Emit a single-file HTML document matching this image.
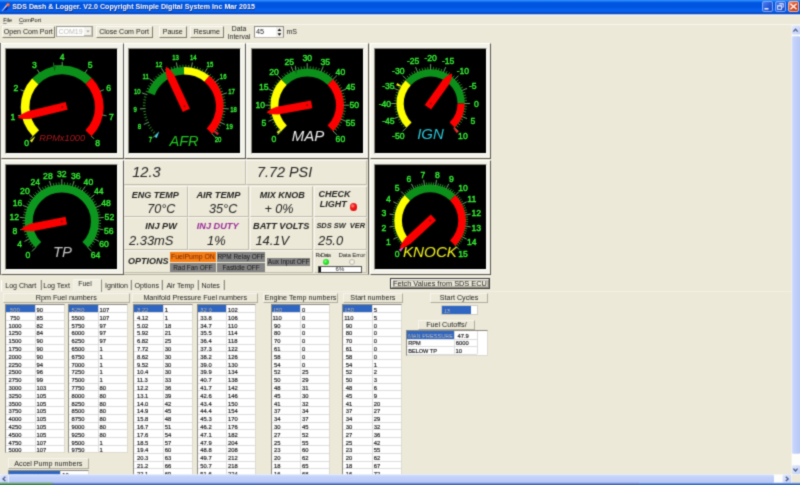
<!DOCTYPE html>
<html lang="en"><head><meta charset="utf-8"><title>SDS Dash &amp; Logger</title>
<style>

html,body{margin:0;padding:0}
body{width:800px;height:500px;overflow:hidden;background:#fff;position:relative;
 font-family:"Liberation Sans",sans-serif;color:#000;font-size:7px;line-height:1}
div,span{position:absolute;box-sizing:border-box;white-space:nowrap}
#win{left:0;top:0;width:800px;height:485px;background:#ece9d8;overflow:hidden;filter:url(#soft)}
#title{left:0;top:0;width:800px;height:14px;border-bottom:0 solid #000;
 background:linear-gradient(#2f8cfc 0%,#2c88fa 6%,#0862ea 14%,#0055e0 21%,#0054e0 52%,#0560ec 68%,#0560ec 82%,#0a4cc6 92%,#0b45b8 100%)}
#title b{position:absolute;left:12.3px;top:4.3px;font-size:7.1px;color:#fff;font-weight:bold;letter-spacing:0.02px;
 text-shadow:0.4px 0.5px 0 #0a2a80}
.wb{top:1.4px;width:11px;height:11px;border:1px solid #7ea9f6;border-radius:2px;overflow:hidden;
 background:linear-gradient(135deg,#4d80f0,#2658d8 55%,#1c46c2)}
#menu{left:0;top:14px;width:800px;height:10px;background:#ece9d8;font-size:5.6px;border-top:1px solid #b4c6ea}
#menu span{top:3.3px;color:#0c0c0c}
#menu u{text-decoration:underline;text-decoration-thickness:0.5px;text-decoration-color:#8a8a8a;text-underline-offset:0.6px}
.btn{background:#ece9d8;border-top:1px solid #fbfaf4;border-left:1px solid #fbfaf4;
 border-right:1px solid #7d7a6e;border-bottom:1px solid #7d7a6e;text-align:center;color:#1c1c1c}
.t7{font-size:7.05px;line-height:9.5px}
.frame{background:#f4f3ea;border-top:1px solid #fefefb;border-left:1px solid #fefefb;
 border-right:1px solid #55534c;border-bottom:1px solid #55534c}
.blk{background:#000;border-top:1px solid #8d8a80;border-left:1px solid #8d8a80;
 border-right:1px solid #fdfdfa;border-bottom:1px solid #fdfdfa}
.box{border-top:1px solid #f8f7f0;border-left:1px solid #f8f7f0;border-right:1px solid #c0bcac;
 border-bottom:1px solid #c0bcac;background:#ece9d8}
.bi{font-weight:bold;font-style:italic;font-size:9.1px;color:#222}
.it{font-style:italic;color:#222}
.opt{font-size:6.45px;color:#161616;text-align:center;background:#838383;line-height:9.8px}
.tbl{background:#fff;border-left:1px solid #8a887e;border-top:1px solid #8a887e;
 border-right:1px solid #dddbd0;border-bottom:1px solid #dddbd0;overflow:hidden;font-size:5.85px;color:#0a0a0a;-webkit-text-stroke:0.14px #111}
.tbl i{position:absolute;left:0;right:0;height:1px;background:#dcdcdc}
.tbl u{position:absolute;top:0;bottom:0;width:1px;background:#dcdcdc}
.tbl s{position:absolute;text-decoration:none;white-space:pre}
.tbl em{position:absolute;background:#2f66c2}
.hdr{font-size:7.18px;line-height:9.6px;border-right-color:#aeab9e;border-bottom-color:#aeab9e;border-top-color:#f6f5ee;border-left-color:#f6f5ee}
.tab{font-size:7.1px;top:283.4px;color:#1c1c1c}
.tsep{top:280px;height:10.4px;width:3px;border-left:1px solid #f2f1e7;border-right:1px solid #8f8c80;background:#d2cfc2}

</style></head><body>
<svg width="0" height="0" style="position:absolute"><defs><filter id="soft" x="0" y="0" width="100%" height="100%" color-interpolation-filters="sRGB"><feConvolveMatrix order="3" kernelMatrix="1 4 1 4 16 4 1 4 1" divisor="36" edgeMode="duplicate" preserveAlpha="true"/></filter></defs></svg>
<div id="win">
<div id="title">
<svg style="position:absolute;left:1px;top:2px" width="10" height="10" viewBox="0 0 10 10"><path d="M2.4 8.7L6.3 4.3L7.4 5.6L5.6 8.2Z" fill="#16248c"/><path d="M0.7 8.9L5.6 2.6L6.6 3.6L1.3 9.1Z" fill="#e6e2fb"/><circle cx="7.1" cy="2.8" r="1.75" fill="#ee5a26"/><circle cx="6.8" cy="2.6" r="0.8" fill="#ffa47a"/></svg>
<b>SDS Dash &amp; Logger. V2.0 Copyright Simple Digital System Inc Mar 2015</b>
<div class="wb" style="left:762.3px"><svg width="9" height="9" viewBox="0 0 9 9" style="position:absolute;left:0;top:0"><rect x="1.4" y="6.1" width="4.1" height="1.4" fill="#fff"/></svg></div>
<div class="wb" style="left:775px"><svg width="9" height="9" viewBox="0 0 9 9" style="position:absolute;left:0;top:0"><path d="M3.3 1.6H7.3V5.2H6.2" stroke="#dfe9ff" stroke-width="0.9" fill="none"/><path d="M3.3 2.1H7.3" stroke="#dfe9ff" stroke-width="0.6"/><rect x="1.6" y="3.7" width="4" height="3.6" stroke="#eef3ff" stroke-width="0.9" fill="#2c5cd8"/><path d="M1.6 4.2H5.6" stroke="#eef3ff" stroke-width="0.6"/></svg></div>
<div class="wb" style="left:787.6px;border-color:#f0b8a4;background:linear-gradient(135deg,#ec8a68,#d9502a 45%,#bf3a16)"><svg width="9" height="9" viewBox="0 0 9 9" style="position:absolute;left:0;top:0"><path d="M1.4 1.7L7.6 7.3M7.6 1.7L1.4 7.3" stroke="#fff" stroke-width="1.25"/></svg></div>
</div>
<div id="menu"><div style="left:0;top:0;width:800px;height:1px;background:#f3f3ee"></div><span style="left:3.2px"><u>F</u>ile</span><span style="left:19px"><u>C</u>omPort</span></div>
<div style="left:0;top:24px;width:800px;height:1px;background:#f7f6ef"></div>
<div class="btn t7" style="left:1.5px;top:26px;width:53.5px;height:11.8px">Open Com Port</div>
<div style="left:55.8px;top:25.6px;width:37.2px;height:11.4px;background:#fff;border:1px solid #9a988f;border-bottom-color:#b9b7ab;font-size:7.05px;line-height:9.6px;color:#bdbbb2;padding-left:1.6px">COM19<div style="right:0;top:0;width:8px;height:9.4px;background:#f3f2ec;border-bottom:1px solid #b5b3a8;border-right:1px solid #c9c7bc"><svg style="position:absolute;left:1.8px;top:3.4px" width="4" height="3" viewBox="0 0 4 3"><path d="M0.2 0.4H3.8L2 2.6Z" fill="#a9a79d"/></svg></div></div>
<div class="btn t7" style="left:95.5px;top:26px;width:57px;height:11.8px">Close Com Port</div>
<div class="btn t7" style="left:159px;top:26px;width:27.5px;height:11.8px">Pause</div>
<div class="btn t7" style="left:190px;top:26px;width:33.5px;height:11.8px">Resume</div>
<div style="left:225px;top:25.3px;width:28px;height:14px;font-size:6.9px;line-height:7.5px;text-align:center;color:#222;white-space:normal">Data Interval</div>
<div style="left:254px;top:26px;width:29.6px;height:12.2px;background:#fff;border:1px solid #8f8d84;border-bottom-color:#b9b7ab;font-size:7.3px;line-height:9.8px;padding-left:0.9px;color:#222">45<div style="right:0;top:0;width:7px;height:10.2px;background:#efeee8"><svg style="position:absolute;left:0;top:0" width="7" height="10.2" viewBox="0 0 7 10.2"><path d="M1.5 3.9L3.4 1.5L5.3 3.9Z M1.5 6.3L3.4 8.7L5.3 6.3Z" fill="#111"/></svg></div></div>
<div style="left:286.5px;top:28px;font-size:7.05px;color:#222">mS</div>
<div style="left:0;top:43px;width:1px;height:232px;background:#77756b"></div>
<div class="frame" style="left:1px;top:43px;width:122.8px;height:115.8px"></div>
<div class="frame" style="left:123.8px;top:43px;width:122.4px;height:115.8px"></div>
<div class="frame" style="left:246.3px;top:43px;width:123.1px;height:115.8px"></div>
<div class="frame" style="left:369.5px;top:43px;width:121.6px;height:115.8px"></div>
<div class="frame" style="left:1px;top:159.5px;width:122.8px;height:115.4px"></div>
<div class="frame" style="left:369.5px;top:159.5px;width:121.6px;height:115.4px"></div>
<div class="blk" style="left:5.2px;top:48.2px;width:112.6px;height:105.6px"></div>
<div class="blk" style="left:128px;top:48.2px;width:112.8px;height:105.6px"></div>
<div class="blk" style="left:251px;top:48.2px;width:112.6px;height:105.6px"></div>
<div class="blk" style="left:373.6px;top:48.2px;width:113px;height:105.6px"></div>
<div class="blk" style="left:5.2px;top:164px;width:112.6px;height:106.4px"></div>
<div class="blk" style="left:373.6px;top:164px;width:113px;height:106.4px"></div>
<div class="frame" style="left:123.8px;top:159px;width:245.6px;height:115.9px;border-left:none;border-top:none;background:#ece9d8;border-bottom-color:#b4b1a2"></div>
<div class="box" style="left:124.2px;top:160px;width:121.4px;height:24.6px"></div>
<div class="box" style="left:246.4px;top:160px;width:120.8px;height:24.6px"></div>
<div class="box" style="left:124.2px;top:185.8px;width:63.6px;height:31.2px"></div>
<div class="box" style="left:188.4px;top:185.8px;width:61px;height:31.2px"></div>
<div class="box" style="left:249.9px;top:185.8px;width:63.3px;height:31.2px"></div>
<div class="box" style="left:313.8px;top:185.8px;width:53.4px;height:31.2px"></div>
<div class="box" style="left:124.2px;top:217.4px;width:63.6px;height:32.2px"></div>
<div class="box" style="left:188.4px;top:217.4px;width:61px;height:32.2px"></div>
<div class="box" style="left:249.9px;top:217.4px;width:63.3px;height:32.2px"></div>
<div class="box" style="left:313.8px;top:217.4px;width:53.4px;height:32.2px"></div>
<div class="box" style="left:124.2px;top:250.2px;width:189px;height:23px"></div>
<div class="box" style="left:313.8px;top:250.2px;width:53.4px;height:23px"></div>
<div class="it" style="left:132.2px;top:165.14px;font-size:14.6px;">12.3</div>
<div class="it" style="left:257px;top:165.31px;font-size:14.4px;">7.72 PSI</div>
<div class="bi" style="left:131.7px;top:190.88px;font-size:9.0px;">ENG TEMP</div>
<div class="it" style="left:147.3px;top:203.33px;font-size:12.6px;">70&deg;C</div>
<div class="bi" style="left:196.4px;top:190.71px;font-size:9.2px;">AIR TEMP</div>
<div class="it" style="left:209.1px;top:203.33px;font-size:12.6px;">35&deg;C</div>
<div class="bi" style="left:259.8px;top:190.68px;font-size:9.0px;">MIX KNOB</div>
<div class="it" style="left:264.4px;top:203.13px;font-size:12.6px;">+ 0%</div>
<div class="bi" style="left:318.4px;top:190.48px;font-size:9.0px;">CHECK</div>
<div class="bi" style="left:319.7px;top:199.58px;font-size:9.0px;">LIGHT</div>
<div class="bi" style="left:145.2px;top:221.51px;font-size:9.2px;">INJ PW</div>
<div class="it" style="left:129px;top:234.58px;font-size:12.9px;">2.33mS</div>
<div class="bi" style="left:196.7px;top:221.51px;font-size:9.2px;color:#9a2a9a">INJ DUTY</div>
<div class="it" style="left:207px;top:234.58px;font-size:12.9px;">1%</div>
<div class="bi" style="left:253px;top:221.91px;font-size:9.2px;">BATT VOLTS</div>
<div class="it" style="left:255.4px;top:234.58px;font-size:12.9px;">14.1V</div>
<div class="bi" style="left:316.4px;top:222.09px;font-size:7.45px;">SDS SW&nbsp; VER</div>
<div class="it" style="left:318px;top:234.58px;font-size:12.9px;">25.0</div>
<div class="bi" style="left:128px;top:257.48px;font-size:9.0px;">OPTIONS</div>
<div class="opt" style="left:169.6px;top:252.3px;width:46.6px;height:9.4px;background:#f67c14;color:#702808;font-size:6.9px">FuelPump ON</div>
<div class="opt" style="left:217.2px;top:252.3px;width:47.6px;height:9.4px">RPM Relay OFF</div>
<div class="opt" style="left:169.6px;top:262.8px;width:46.6px;height:9.2px">Rad Fan OFF</div>
<div class="opt" style="left:217.2px;top:262.8px;width:47.6px;height:9.2px">Fastidle OFF</div>
<div class="opt" style="left:267.3px;top:257.8px;width:43px;height:8.6px;line-height:8.8px">Aux Input OFF</div>
<div style="left:349.6px;top:203.4px;width:7.8px;height:7.8px;border-radius:50%;background:radial-gradient(circle at 38% 36%,#ff9a8a 0%,#f01818 35%,#d80000 100%)"></div>
<div class="" style="left:315.5px;top:252.9px;font-size:5.7px;color:#1a1a1a;letter-spacing:-0.72px">RxData</div>
<div class="" style="left:338.4px;top:252.1px;font-size:6.1px;color:#1a1a1a;letter-spacing:-0.14px">Data Error</div>
<div style="left:322.8px;top:259px;width:6.2px;height:6.2px;border-radius:50%;background:radial-gradient(circle at 40% 40%,#8dff8d 0%,#22e022 45%,#12c012 100%)"></div>
<div style="left:349px;top:259px;width:6px;height:6px;border-radius:50%;background:#f4f2ea;border:0.6px solid #bdb9a8"></div>
<div style="left:317.6px;top:266px;width:44.6px;height:6.8px;background:#fff;border:1px solid #505050;font-size:6px;text-align:center;line-height:5.2px;color:#222">6%<div style="left:0;top:0;width:2px;height:100%;background:#111"></div></div>
<svg style="position:absolute;left:0;top:0" width="495" height="275" viewBox="0 0 495 275" font-family="Liberation Sans, sans-serif">
<path d="M32.86 136.34A41.5 41.5 0 0 1 32.23 78.30L38.51 84.31A32.8 32.8 0 0 0 39.01 130.19Z" fill="#ffff00"/>
<path d="M32.23 78.30A41.5 41.5 0 0 1 91.83 77.94L85.62 84.04A32.8 32.8 0 0 0 38.51 84.31Z" fill="#0b9019"/>
<path d="M91.83 77.94A41.5 41.5 0 0 1 91.54 136.34L85.39 130.19A32.8 32.8 0 0 0 85.62 84.04Z" fill="#ff0000"/>
<path d="M33.21 135.99L30.31 138.89M21.99 115.00L17.97 115.80M24.32 91.31L20.53 89.74M39.42 72.91L37.14 69.50M62.20 66.00L62.20 61.90M84.98 72.91L87.26 69.50M100.08 91.31L103.87 89.74M102.41 115.00L106.43 115.80M91.19 135.99L94.09 138.89" stroke="#74b474" stroke-width="0.9" fill="none"/>
<g font-size="8.6" fill="#34f034" stroke="#34f034" stroke-width="0.42" text-anchor="middle">
<text x="26.7" y="145.6">0</text>
<text x="13.0" y="119.9">1</text>
<text x="15.8" y="90.9">2</text>
<text x="34.3" y="68.4">3</text>
<text x="62.2" y="59.9">4</text>
<text x="90.1" y="68.4">5</text>
<text x="108.6" y="90.9">6</text>
<text x="111.4" y="119.9">7</text>
<text x="97.7" y="145.6">8</text>
</g>
<path d="M-3.2 -1.3L3.2 -0.2L3.2 0.2L-3.2 1.3Z" fill="#f4f020" transform="translate(32.9 139.1) rotate(-50)"/>
<text x="62.2" y="141.0" font-size="9.25" font-style="italic" fill="#a81c20" text-anchor="middle">RPMx1000</text>
<g transform="translate(62.2 107.0) rotate(166.39)"><path d="M-4.6 -3.95L-4.6 3.95L34.6 3.95L40.6 2.6L44.1 1.1L45.6 0L44.1 -1.1L40.6 -2.6L34.6 -3.95Z" fill="#fb0000"/><circle cx="0" cy="0" r="0.9" fill="#700"/></g>
<path d="M147.57 92.49A39.3 39.3 0 0 1 183.97 66.90L184.06 74.60A31.6 31.6 0 0 0 154.79 95.17Z" fill="#0b9019"/>
<path d="M183.97 66.90A39.3 39.3 0 0 1 209.38 75.86L204.48 81.80A31.6 31.6 0 0 0 184.06 74.60Z" fill="#ffff00"/>
<path d="M209.38 75.86A39.3 39.3 0 0 1 212.19 133.99L206.74 128.54A31.6 31.6 0 0 0 204.48 81.80Z" fill="#ff0000"/>
<path d="M156.96 133.64L152.93 137.67M149.02 122.12L143.82 124.46M145.67 108.54L139.98 108.89M147.36 94.66L141.91 92.96M153.86 82.27L149.37 78.76M164.33 73.00L161.38 68.12M177.41 68.04L176.38 62.43M191.39 68.04L192.42 62.43M204.47 73.00L207.42 68.12M214.94 82.27L219.43 78.76M221.44 94.66L226.89 92.96M223.13 108.54L228.82 108.89M219.78 122.12L224.98 124.46M211.84 133.64L215.87 137.67" stroke="#74b474" stroke-width="0.9" fill="none"/>
<path d="M154.90 131.71L153.01 133.34M153.13 129.50L151.12 131.00M151.52 127.18L149.41 128.52M150.09 124.74L147.89 125.93M147.77 119.59L145.42 120.45M146.90 116.90L144.49 117.59M146.22 114.15L143.77 114.66M145.74 111.37L143.27 111.70M145.40 105.73L142.90 105.70M145.54 102.91L143.05 102.69M145.88 100.10L143.41 99.71M146.42 97.32L143.99 96.76M148.10 91.93L145.78 91.02M149.23 89.34L146.98 88.26M150.55 86.84L148.38 85.59M152.04 84.43L149.96 83.04M155.52 79.99L153.67 78.31M157.50 77.96L155.77 76.15M159.61 76.09L158.02 74.16M161.86 74.37L160.41 72.33M166.69 71.45L165.56 69.22M169.26 70.26L168.29 67.96M171.90 69.26L171.10 66.89M174.61 68.45L173.98 66.03M180.17 67.43L179.90 64.95M182.99 67.23L182.90 64.73M185.81 67.23L185.90 64.73M188.63 67.43L188.90 64.95M194.19 68.45L194.82 66.03M196.90 69.26L197.70 66.89M199.54 70.26L200.51 67.96M202.11 71.45L203.24 69.22M206.94 74.37L208.39 72.33M209.19 76.09L210.78 74.16M211.30 77.96L213.03 76.15M213.28 79.99L215.13 78.31M216.76 84.43L218.84 83.04M218.25 86.84L220.42 85.59M219.57 89.34L221.82 88.26M220.70 91.93L223.02 91.02M222.38 97.32L224.81 96.76M222.92 100.10L225.39 99.71M223.26 102.91L225.75 102.69M223.40 105.73L225.90 105.70M223.06 111.37L225.53 111.70M222.58 114.15L225.03 114.66M221.90 116.90L224.31 117.59M221.03 119.59L223.38 120.45M218.71 124.74L220.91 125.93M217.28 127.18L219.39 128.52M215.67 129.50L217.68 131.00M213.90 131.71L215.79 133.34" stroke="#38bc38" stroke-width="0.75" fill="none"/>
<g font-size="7.5" fill="#34f034" stroke="#34f034" stroke-width="0.42" text-anchor="middle">
<text transform="translate(150.5 141.5) scale(0.8 1)">7</text>
<text transform="translate(139.4 129.1) scale(0.8 1)">8</text>
<text transform="translate(135.2 111.9) scale(0.8 1)">9</text>
<text transform="translate(137.3 94.2) scale(0.8 1)">10</text>
<text transform="translate(145.6 78.5) scale(0.8 1)">11</text>
<text transform="translate(158.9 66.7) scale(0.8 1)">12</text>
<text transform="translate(175.5 60.4) scale(0.8 1)">13</text>
<text transform="translate(193.3 60.4) scale(0.8 1)">14</text>
<text transform="translate(209.9 66.7) scale(0.8 1)">15</text>
<text transform="translate(223.2 78.5) scale(0.8 1)">16</text>
<text transform="translate(231.5 94.2) scale(0.8 1)">17</text>
<text transform="translate(233.6 111.9) scale(0.8 1)">18</text>
<text transform="translate(229.4 129.1) scale(0.8 1)">19</text>
<text transform="translate(218.1 141.5) scale(0.8 1)">20</text>
</g>
<path d="M-3.2 -1.3L3.2 -0.2L3.2 0.2L-3.2 1.3Z" fill="#48dcf4" transform="translate(157.2 134.6) rotate(-60)"/>
<path d="M-3.2 -1.3L3.2 -0.2L3.2 0.2L-3.2 1.3Z" fill="#e4203a" transform="translate(215.8 132.0) rotate(224)"/>
<text x="184" y="145.5" font-size="14.6" font-style="italic" fill="#22c822" text-anchor="middle">AFR</text>
<g transform="translate(184.4 106.2) rotate(245.08)"><path d="M-4.6 -3.95L-4.6 3.95L32.5 3.95L38.5 2.6L42.0 1.1L43.5 0L42.0 -1.1L38.5 -2.6L32.5 -3.95Z" fill="#fb0000"/><circle cx="0" cy="0" r="0.9" fill="#700"/></g>
<path d="M281.18 131.22A36.8 36.8 0 0 1 281.18 79.18L286.84 84.84A28.8 28.8 0 0 0 286.84 125.56Z" fill="#ffff00"/>
<path d="M281.18 79.18A36.8 36.8 0 0 1 333.22 79.18L327.56 84.84A28.8 28.8 0 0 0 286.84 84.84Z" fill="#0b9019"/>
<path d="M333.22 79.18A36.8 36.8 0 0 1 333.22 131.22L327.56 125.56A28.8 28.8 0 0 0 327.56 84.84Z" fill="#ff0000"/>
<path d="M281.53 130.87L277.50 134.90M273.66 119.09L268.40 121.27M270.90 105.20L265.20 105.20M273.66 91.31L268.40 89.13M281.53 79.53L277.50 75.50M293.31 71.66L291.13 66.40M307.20 68.90L307.20 63.20M321.09 71.66L323.27 66.40M332.87 79.53L336.90 75.50M340.74 91.31L346.00 89.13M343.50 105.20L349.20 105.20M340.74 119.09L346.00 121.27M332.87 130.87L336.90 134.90" stroke="#74b474" stroke-width="0.9" fill="none"/>
<path d="M279.45 128.90L277.54 130.53M277.67 126.65L275.65 128.12M276.08 124.27L273.95 125.58M274.68 121.77L272.45 122.91M272.49 116.48L270.11 117.25M271.71 113.72L269.28 114.30M271.15 110.91L268.68 111.30M270.81 108.06L268.32 108.26M270.81 102.34L268.32 102.14M271.15 99.49L268.68 99.10M271.71 96.68L269.28 96.10M272.49 93.92L270.11 93.15M274.68 88.63L272.45 87.49M276.08 86.13L273.95 84.82M277.67 83.75L275.65 82.28M279.45 81.50L277.54 79.87M283.50 77.45L281.87 75.54M285.75 75.67L284.28 73.65M288.13 74.08L286.82 71.95M290.63 72.68L289.49 70.45M295.92 70.49L295.15 68.11M298.68 69.71L298.10 67.28M301.49 69.15L301.10 66.68M304.34 68.81L304.14 66.32M310.06 68.81L310.26 66.32M312.91 69.15L313.30 66.68M315.72 69.71L316.30 67.28M318.48 70.49L319.25 68.11M323.77 72.68L324.91 70.45M326.27 74.08L327.58 71.95M328.65 75.67L330.12 73.65M330.90 77.45L332.53 75.54M334.95 81.50L336.86 79.87M336.73 83.75L338.75 82.28M338.32 86.13L340.45 84.82M339.72 88.63L341.95 87.49M341.91 93.92L344.29 93.15M342.69 96.68L345.12 96.10M343.25 99.49L345.72 99.10M343.59 102.34L346.08 102.14M343.59 108.06L346.08 108.26M343.25 110.91L345.72 111.30M342.69 113.72L345.12 114.30M341.91 116.48L344.29 117.25M339.72 121.77L341.95 122.91M338.32 124.27L340.45 125.58M336.73 126.65L338.75 128.12M334.95 128.90L336.86 130.53" stroke="#38bc38" stroke-width="0.75" fill="none"/>
<g font-size="8.6" fill="#34f034" stroke="#34f034" stroke-width="0.42" text-anchor="middle">
<text x="274.0" y="141.5">0</text>
<text x="263.8" y="126.3">5</text>
<text x="260.2" y="108.3">10</text>
<text x="263.8" y="90.3">15</text>
<text x="274.0" y="75.1">20</text>
<text x="289.2" y="64.9">25</text>
<text x="307.2" y="61.3">30</text>
<text x="325.2" y="64.9">35</text>
<text x="340.4" y="75.1">40</text>
<text x="350.6" y="90.3">45</text>
<text x="354.2" y="108.3">50</text>
<text x="350.6" y="126.3">55</text>
<text x="340.4" y="141.5">60</text>
</g>
<path d="M-3.2 -1.3L3.2 -0.2L3.2 0.2L-3.2 1.3Z" fill="#f4f020" transform="translate(279.8 130.8) rotate(-42)"/>
<text x="308" y="140.7" font-size="15" font-style="italic" fill="#f0f0f0" text-anchor="middle">MAP</text>
<g transform="translate(307.2 105.2) rotate(169.74)"><path d="M-4.6 -3.95L-4.6 3.95L30.3 3.95L36.3 2.6L39.8 1.1L41.3 0L39.8 -1.1L36.3 -2.6L30.3 -3.95Z" fill="#fb0000"/><circle cx="0" cy="0" r="0.9" fill="#700"/></g>
<path d="M406.42 127.68A34.2 34.2 0 0 1 405.49 80.29L410.85 85.24A26.9 26.9 0 0 0 411.58 122.52Z" fill="#ffff00"/>
<path d="M405.49 80.29A34.2 34.2 0 0 1 464.80 103.50L457.50 103.50A26.9 26.9 0 0 0 410.85 85.24Z" fill="#0b9019"/>
<path d="M464.80 103.50A34.2 34.2 0 0 1 454.78 127.68L449.62 122.52A26.9 26.9 0 0 0 457.50 103.50Z" fill="#ff0000"/>
<path d="M406.77 127.33L402.74 131.36M399.47 116.40L394.20 118.58M396.90 103.50L391.20 103.50M399.47 90.60L394.20 88.42M406.77 79.67L402.74 75.64M417.70 72.37L415.52 67.10M430.60 69.80L430.60 64.10M443.50 72.37L445.68 67.10M454.43 79.67L458.46 75.64M461.73 90.60L467.00 88.42M464.30 103.50L470.00 103.50M461.73 116.40L467.00 118.58M454.43 127.33L458.46 131.36" stroke="#74b474" stroke-width="0.9" fill="none"/>
<path d="M404.82 125.52L402.92 127.14M403.17 123.43L401.15 124.90M401.70 121.21L399.56 122.52M400.39 118.89L398.17 120.03M398.36 113.98L395.98 114.75M397.64 111.41L395.21 112.00M397.12 108.80L394.65 109.19M396.80 106.16L394.31 106.36M396.80 100.84L394.31 100.64M397.12 98.20L394.65 97.81M397.64 95.59L395.21 95.00M398.36 93.02L395.98 92.25M400.39 88.11L398.17 86.97M401.70 85.79L399.56 84.48M403.17 83.57L401.15 82.10M404.82 81.48L402.92 79.86M408.58 77.72L406.96 75.82M410.67 76.07L409.20 74.05M412.89 74.60L411.58 72.46M415.21 73.29L414.07 71.07M420.12 71.26L419.35 68.88M422.69 70.54L422.10 68.11M425.30 70.02L424.91 67.55M427.94 69.70L427.74 67.21M433.26 69.70L433.46 67.21M435.90 70.02L436.29 67.55M438.51 70.54L439.10 68.11M441.08 71.26L441.85 68.88M445.99 73.29L447.13 71.07M448.31 74.60L449.62 72.46M450.53 76.07L452.00 74.05M452.62 77.72L454.24 75.82M456.38 81.48L458.28 79.86M458.03 83.57L460.05 82.10M459.50 85.79L461.64 84.48M460.81 88.11L463.03 86.97M462.84 93.02L465.22 92.25M463.56 95.59L465.99 95.00M464.08 98.20L466.55 97.81M464.40 100.84L466.89 100.64M464.40 106.16L466.89 106.36M464.08 108.80L466.55 109.19M463.56 111.41L465.99 112.00M462.84 113.98L465.22 114.75M460.81 118.89L463.03 120.03M459.50 121.21L461.64 122.52M458.03 123.43L460.05 124.90M456.38 125.52L458.28 127.14" stroke="#38bc38" stroke-width="0.75" fill="none"/>
<g font-size="8.6" fill="#34f034" stroke="#34f034" stroke-width="0.42" text-anchor="middle">
<text x="398.3" y="138.9">-50</text>
<text x="388.4" y="124.1">-45</text>
<text x="384.9" y="106.6">-40</text>
<text x="388.4" y="89.1">-35</text>
<text x="398.3" y="74.3">-30</text>
<text x="413.1" y="64.4">-25</text>
<text x="430.6" y="60.9">-20</text>
<text x="448.1" y="64.4">-15</text>
<text x="462.9" y="74.3">-10</text>
<text x="472.8" y="89.1">-5</text>
<text x="476.3" y="106.6">0</text>
<text x="472.8" y="124.1">5</text>
<text x="462.9" y="138.9">10</text>
</g>
<path d="M-3.2 -1.3L3.2 -0.2L3.2 0.2L-3.2 1.3Z" fill="#ffff00" transform="translate(399.6 85.6) rotate(28)"/>
<path d="M-3.2 -1.3L3.2 -0.2L3.2 0.2L-3.2 1.3Z" fill="#ff2020" transform="translate(455.5 130) rotate(225)"/>
<text x="430.5" y="138.8" font-size="15" font-style="italic" fill="#2cc6d6" text-anchor="middle">IGN</text>
<g transform="translate(430.6 103.5) rotate(305.55)"><path d="M-4.6 -3.95L-4.6 3.95L25.8 3.95L31.8 2.6L35.3 1.1L36.8 0L35.3 -1.1L31.8 -2.6L25.8 -3.95Z" fill="#fb0000"/><circle cx="0" cy="0" r="0.9" fill="#700"/></g>
<path d="M35.57 247.73A37.1 37.1 0 1 1 88.03 247.73L82.38 242.08A29.1 29.1 0 1 0 41.22 242.08Z" fill="#0c981e"/>
<path d="M35.92 247.38L31.89 251.41M29.52 238.75L24.49 241.44M25.90 228.64L20.31 229.75M25.38 217.91L19.70 217.35M27.99 207.49L22.72 205.31M33.51 198.28L29.10 194.67M41.47 191.07L38.30 186.33M51.18 186.48L49.52 181.02M61.80 184.90L61.80 179.20M72.42 186.48L74.08 181.02M82.13 191.07L85.30 186.33M90.09 198.28L94.50 194.67M95.61 207.49L100.88 205.31M98.22 217.91L103.90 217.35M97.70 228.64L103.29 229.75M94.08 238.75L99.11 241.44M87.68 247.38L91.71 251.41" stroke="#74b474" stroke-width="0.9" fill="none"/>
<path d="M33.93 245.54L32.04 247.17M32.24 243.42L30.23 244.91M30.71 241.19L28.60 242.53M28.16 236.41L25.87 237.43M27.15 233.90L24.80 234.74M26.33 231.32L23.92 231.98M25.28 226.00L22.80 226.31M25.04 223.31L22.55 223.43M25.01 220.60L22.51 220.54M25.54 215.21L23.08 214.78M26.10 212.56L23.68 211.95M26.86 209.96L24.48 209.17M28.93 204.95L26.70 203.83M30.24 202.58L28.09 201.30M31.71 200.31L29.67 198.87M35.15 196.12L33.34 194.40M37.09 194.23L35.41 192.38M39.16 192.49L37.62 190.52M43.66 189.48L42.43 187.31M46.07 188.23L45.00 185.97M48.56 187.17L47.66 184.83M53.74 185.59L53.19 183.15M56.40 185.10L56.03 182.63M59.09 184.80L58.91 182.31M64.51 184.80L64.69 182.31M67.20 185.10L67.57 182.63M69.86 185.59L70.41 183.15M75.04 187.17L75.94 184.83M77.53 188.23L78.60 185.97M79.94 189.48L81.17 187.31M84.44 192.49L85.98 190.52M86.51 194.23L88.19 192.38M88.45 196.12L90.26 194.40M91.89 200.31L93.93 198.87M93.36 202.58L95.51 201.30M94.67 204.95L96.90 203.83M96.74 209.96L99.12 209.17M97.50 212.56L99.92 211.95M98.06 215.21L100.52 214.78M98.59 220.60L101.09 220.54M98.56 223.31L101.05 223.43M98.32 226.00L100.80 226.31M97.27 231.32L99.68 231.98M96.45 233.90L98.80 234.74M95.44 236.41L97.73 237.43M92.89 241.19L95.00 242.53M91.36 243.42L93.37 244.91M89.67 245.54L91.56 247.17" stroke="#38bc38" stroke-width="0.75" fill="none"/>
<g font-size="8.6" fill="#34f034" stroke="#34f034" stroke-width="0.42" text-anchor="middle">
<text x="28.0" y="258.4">0</text>
<text x="19.6" y="247.1">4</text>
<text x="14.9" y="233.9">8</text>
<text x="14.2" y="219.9">12</text>
<text x="17.6" y="206.3">16</text>
<text x="24.9" y="194.3">20</text>
<text x="35.2" y="184.9">24</text>
<text x="47.9" y="178.9">28</text>
<text x="61.8" y="176.8">32</text>
<text x="75.7" y="178.9">36</text>
<text x="88.4" y="184.9">40</text>
<text x="98.7" y="194.3">44</text>
<text x="106.0" y="206.3">48</text>
<text x="109.4" y="219.9">52</text>
<text x="108.7" y="233.9">56</text>
<text x="104.0" y="247.1">60</text>
<text x="95.6" y="258.4">64</text>
</g>
<text x="62.5" y="257" font-size="14.8" font-style="italic" fill="#c6c6c6" text-anchor="middle">TP</text>
<g transform="translate(61.8 221.5) rotate(169.00)"><path d="M-4.6 -3.95L-4.6 3.95L30.5 3.95L36.5 2.6L40.0 1.1L41.5 0L40.0 -1.1L36.5 -2.6L30.5 -3.95Z" fill="#fb0000"/><circle cx="0" cy="0" r="0.9" fill="#700"/></g>
<path d="M404.71 245.89A35.9 35.9 0 0 1 404.71 195.11L410.16 200.56A28.2 28.2 0 0 0 410.16 240.44Z" fill="#ffff00"/>
<path d="M404.71 195.11A35.9 35.9 0 0 1 455.49 195.11L450.04 200.56A28.2 28.2 0 0 0 410.16 200.56Z" fill="#0b9019"/>
<path d="M455.49 195.11A35.9 35.9 0 0 1 455.49 245.89L450.04 240.44A28.2 28.2 0 0 0 450.04 200.56Z" fill="#ff0000"/>
<path d="M405.07 245.53L401.04 249.56M398.56 236.57L393.48 239.16M395.14 226.04L389.51 226.93M395.14 214.96L389.51 214.07M398.56 204.43L393.48 201.84M405.07 195.47L401.04 191.44M414.03 188.96L411.44 183.88M424.56 185.54L423.67 179.91M435.64 185.54L436.53 179.91M446.17 188.96L448.76 183.88M455.13 195.47L459.16 191.44M461.64 204.43L466.72 201.84M465.06 214.96L470.69 214.07M465.06 226.04L470.69 226.93M461.64 236.57L466.72 239.16M455.13 245.53L459.16 249.56" stroke="#74b474" stroke-width="0.9" fill="none"/>
<path d="M403.40 244.04L401.52 245.70M401.97 242.32L400.00 243.85M400.66 240.51L398.59 241.92M399.46 238.62L397.31 239.89M397.43 234.64L395.13 235.63M396.60 232.56L394.25 233.41M395.91 230.43L393.51 231.13M395.36 228.27L392.92 228.81M394.66 223.85L392.17 224.09M394.52 221.62L392.02 221.70M394.52 219.38L392.02 219.30M394.66 217.15L392.17 216.91M395.36 212.73L392.92 212.19M395.91 210.57L393.51 209.87M396.60 208.44L394.25 207.59M397.43 206.36L395.13 205.37M399.46 202.38L397.31 201.11M400.66 200.49L398.59 199.08M401.97 198.68L400.00 197.15M403.40 196.96L401.52 195.30M406.56 193.80L404.90 191.92M408.28 192.37L406.75 190.40M410.09 191.06L408.68 188.99M411.98 189.86L410.71 187.71M415.96 187.83L414.97 185.53M418.04 187.00L417.19 184.65M420.17 186.31L419.47 183.91M422.33 185.76L421.79 183.32M426.75 185.06L426.51 182.57M428.98 184.92L428.90 182.42M431.22 184.92L431.30 182.42M433.45 185.06L433.69 182.57M437.87 185.76L438.41 183.32M440.03 186.31L440.73 183.91M442.16 187.00L443.01 184.65M444.24 187.83L445.23 185.53M448.22 189.86L449.49 187.71M450.11 191.06L451.52 188.99M451.92 192.37L453.45 190.40M453.64 193.80L455.30 191.92M456.80 196.96L458.68 195.30M458.23 198.68L460.20 197.15M459.54 200.49L461.61 199.08M460.74 202.38L462.89 201.11M462.77 206.36L465.07 205.37M463.60 208.44L465.95 207.59M464.29 210.57L466.69 209.87M464.84 212.73L467.28 212.19M465.54 217.15L468.03 216.91M465.68 219.38L468.18 219.30M465.68 221.62L468.18 221.70M465.54 223.85L468.03 224.09M464.84 228.27L467.28 228.81M464.29 230.43L466.69 231.13M463.60 232.56L465.95 233.41M462.77 234.64L465.07 235.63M460.74 238.62L462.89 239.89M459.54 240.51L461.61 241.92M458.23 242.32L460.20 243.85M456.80 244.04L458.68 245.70" stroke="#38bc38" stroke-width="0.75" fill="none"/>
<g font-size="8.6" fill="#34f034" stroke="#34f034" stroke-width="0.42" text-anchor="middle">
<text x="397.1" y="256.6">0</text>
<text x="388.5" y="244.8">1</text>
<text x="384.0" y="230.9">2</text>
<text x="384.0" y="216.3">3</text>
<text x="388.5" y="202.4">4</text>
<text x="397.1" y="190.6">5</text>
<text x="408.9" y="182.0">6</text>
<text x="422.8" y="177.5">7</text>
<text x="437.4" y="177.5">8</text>
<text x="451.3" y="182.0">9</text>
<text x="463.1" y="190.6">10</text>
<text x="471.7" y="202.4">11</text>
<text x="476.2" y="216.3">12</text>
<text x="476.2" y="230.9">13</text>
<text x="471.7" y="244.8">14</text>
<text x="463.1" y="256.6">15</text>
</g>
<path d="M-3.2 -1.3L3.2 -0.2L3.2 0.2L-3.2 1.3Z" fill="#e060c0" transform="translate(402 248.5) rotate(-45)"/>
<text x="430" y="257" font-size="15.2" font-style="italic" fill="#f2f21c" text-anchor="middle">KNOCK</text>
<g transform="translate(430.1 220.5) rotate(137.34)"><path d="M-4.6 -3.95L-4.6 3.95L29.8 3.95L35.8 2.6L39.3 1.1L40.8 0L39.3 -1.1L35.8 -2.6L29.8 -3.95Z" fill="#fb0000"/><circle cx="0" cy="0" r="0.9" fill="#700"/></g>
<path d="M53.6 62.6V65.6H62.2" stroke="#2c9c2c" stroke-width="0.7" fill="none"/><path d="M53.3 66.2L55.7 66.6L54.7 71.4Z" fill="#0a5c12"/><path d="M295.3 65.8L295.9 69.6" stroke="#7fc47f" stroke-width="0.8" fill="none"/><path d="M294.6 70.2L296.8 69.8L296.6 74Z" fill="#0a5c12"/>
</svg>
<div style="left:390px;top:277.6px;width:99.8px;height:11.4px;border:1px solid #3a3a3a;background:#ece9d8"></div>
<div class="btn" style="left:391px;top:278.6px;width:97.8px;height:9.4px;line-height:7.4px;font-size:7.36px;border-right-color:#8d8a7e;border-bottom-color:#8d8a7e">Fetch Values from SDS ECU</div>
<div style="left:393px;top:280.2px;width:94.6px;height:6.8px;border:1px solid rgba(90,90,90,0.33)"></div>
<div style="left:0;top:291px;width:792px;height:1px;background:#f3f1e5"></div>
<div class="tab" style="left:5.2px">Log Chart</div>
<div class="tab" style="left:43.2px">Log Text</div>
<div class="tab" style="left:105px">Ignition</div>
<div class="tab" style="left:134.6px">Options</div>
<div class="tab" style="left:166.4px">Air Temp</div>
<div class="tab" style="left:201.4px">Notes</div>
<div class="tsep" style="left:38.6px"></div>
<div class="tsep" style="left:129.4px"></div>
<div class="tsep" style="left:159.8px"></div>
<div class="tsep" style="left:195.8px"></div>
<div class="tsep" style="left:221.8px"></div>
<div style="left:73.4px;top:279px;width:28.2px;height:13.4px;background:#f0eee0;border-top:1px solid #f6f5ee;border-left:1px solid #f3f2e8;border-right:1px solid #8f8c80"></div>
<div class="tab" style="left:78.2px;top:281.3px;font-size:6.95px">Fuel</div>
<div style="left:1.4px;top:279.6px;width:0;height:11px;border-left:0.7px solid #fff"></div>
<div class="btn hdr" style="left:3px;top:293px;width:126.6px;height:10.2px">Rpm Fuel numbers</div>
<div class="btn hdr" style="left:132px;top:293px;width:126.4px;height:10.2px">Manifold Pressure Fuel numbers</div>
<div class="btn hdr" style="left:263px;top:293px;width:75.2px;height:10.2px">Engine Temp numbers</div>
<div class="btn hdr" style="left:342.6px;top:293px;width:60.6px;height:10.2px">Start numbers</div>
<div class="btn hdr" style="left:430px;top:293px;width:58.2px;height:10.2px">Start Cycles</div>
<div class="btn hdr" style="left:417.6px;top:319.6px;width:57.6px;height:10.2px">Fuel Cutoffs/</div>
<div class="btn hdr" style="left:7.6px;top:457.6px;width:81.6px;height:11.2px;line-height:10px">Accel Pump numbers</div>
<div class="tbl" style="left:5px;top:304px;width:59.8px;height:148.6px"><em style="left:0;top:0;width:28.6px;height:7.3999999999999995px"></em><i style="top:7.30px"></i><i style="top:15.10px"></i><i style="top:22.90px"></i><i style="top:30.70px"></i><i style="top:38.50px"></i><i style="top:46.30px"></i><i style="top:54.10px"></i><i style="top:61.90px"></i><i style="top:69.70px"></i><i style="top:77.50px"></i><i style="top:85.30px"></i><i style="top:93.10px"></i><i style="top:100.90px"></i><i style="top:108.70px"></i><i style="top:116.50px"></i><i style="top:124.30px"></i><i style="top:132.10px"></i><i style="top:139.90px"></i><i style="top:147.70px"></i><i style="top:155.50px"></i><u style="left:28.6px"></u><s style="color:#e4ebfb;left:2.5px;top:2.90px"> 500</s><s style="left:30.400000000000002px;top:2.90px">90</s><s style="left:2.5px;top:10.70px"> 750</s><s style="left:30.400000000000002px;top:10.70px">85</s><s style="left:2.5px;top:18.50px">1000</s><s style="left:30.400000000000002px;top:18.50px">82</s><s style="left:2.5px;top:26.30px">1250</s><s style="left:30.400000000000002px;top:26.30px">84</s><s style="left:2.5px;top:34.10px">1500</s><s style="left:30.400000000000002px;top:34.10px">90</s><s style="left:2.5px;top:41.90px">1750</s><s style="left:30.400000000000002px;top:41.90px">90</s><s style="left:2.5px;top:49.70px">2000</s><s style="left:30.400000000000002px;top:49.70px">90</s><s style="left:2.5px;top:57.50px">2250</s><s style="left:30.400000000000002px;top:57.50px">94</s><s style="left:2.5px;top:65.30px">2500</s><s style="left:30.400000000000002px;top:65.30px">96</s><s style="left:2.5px;top:73.10px">2750</s><s style="left:30.400000000000002px;top:73.10px">99</s><s style="left:2.5px;top:80.90px">3000</s><s style="left:30.400000000000002px;top:80.90px">103</s><s style="left:2.5px;top:88.70px">3250</s><s style="left:30.400000000000002px;top:88.70px">105</s><s style="left:2.5px;top:96.50px">3500</s><s style="left:30.400000000000002px;top:96.50px">105</s><s style="left:2.5px;top:104.30px">3750</s><s style="left:30.400000000000002px;top:104.30px">105</s><s style="left:2.5px;top:112.10px">4000</s><s style="left:30.400000000000002px;top:112.10px">105</s><s style="left:2.5px;top:119.90px">4250</s><s style="left:30.400000000000002px;top:119.90px">105</s><s style="left:2.5px;top:127.70px">4500</s><s style="left:30.400000000000002px;top:127.70px">105</s><s style="left:2.5px;top:135.50px">4750</s><s style="left:30.400000000000002px;top:135.50px">107</s><s style="left:2.5px;top:143.30px">5000</s><s style="left:30.400000000000002px;top:143.30px">107</s></div>
<div class="tbl" style="left:68px;top:304px;width:59.8px;height:148.6px"><em style="left:0;top:0;width:28.6px;height:7.3999999999999995px"></em><i style="top:7.30px"></i><i style="top:15.10px"></i><i style="top:22.90px"></i><i style="top:30.70px"></i><i style="top:38.50px"></i><i style="top:46.30px"></i><i style="top:54.10px"></i><i style="top:61.90px"></i><i style="top:69.70px"></i><i style="top:77.50px"></i><i style="top:85.30px"></i><i style="top:93.10px"></i><i style="top:100.90px"></i><i style="top:108.70px"></i><i style="top:116.50px"></i><i style="top:124.30px"></i><i style="top:132.10px"></i><i style="top:139.90px"></i><i style="top:147.70px"></i><i style="top:155.50px"></i><u style="left:28.6px"></u><s style="color:#e4ebfb;left:2.5px;top:2.90px">5250</s><s style="left:30.400000000000002px;top:2.90px">107</s><s style="left:2.5px;top:10.70px">5500</s><s style="left:30.400000000000002px;top:10.70px">107</s><s style="left:2.5px;top:18.50px">5750</s><s style="left:30.400000000000002px;top:18.50px">97</s><s style="left:2.5px;top:26.30px">6000</s><s style="left:30.400000000000002px;top:26.30px">97</s><s style="left:2.5px;top:34.10px">6250</s><s style="left:30.400000000000002px;top:34.10px">97</s><s style="left:2.5px;top:41.90px">6500</s><s style="left:30.400000000000002px;top:41.90px">1</s><s style="left:2.5px;top:49.70px">6750</s><s style="left:30.400000000000002px;top:49.70px">1</s><s style="left:2.5px;top:57.50px">7000</s><s style="left:30.400000000000002px;top:57.50px">1</s><s style="left:2.5px;top:65.30px">7250</s><s style="left:30.400000000000002px;top:65.30px">1</s><s style="left:2.5px;top:73.10px">7500</s><s style="left:30.400000000000002px;top:73.10px">1</s><s style="left:2.5px;top:80.90px">7750</s><s style="left:30.400000000000002px;top:80.90px">80</s><s style="left:2.5px;top:88.70px">8000</s><s style="left:30.400000000000002px;top:88.70px">80</s><s style="left:2.5px;top:96.50px">8250</s><s style="left:30.400000000000002px;top:96.50px">80</s><s style="left:2.5px;top:104.30px">8500</s><s style="left:30.400000000000002px;top:104.30px">80</s><s style="left:2.5px;top:112.10px">8750</s><s style="left:30.400000000000002px;top:112.10px">80</s><s style="left:2.5px;top:119.90px">9000</s><s style="left:30.400000000000002px;top:119.90px">80</s><s style="left:2.5px;top:127.70px">9250</s><s style="left:30.400000000000002px;top:127.70px">80</s><s style="left:2.5px;top:135.50px">9500</s><s style="left:30.400000000000002px;top:135.50px">1</s><s style="left:2.5px;top:143.30px">9750</s><s style="left:30.400000000000002px;top:143.30px">1</s></div>
<div class="tbl" style="left:133.4px;top:304px;width:59.6px;height:172px"><em style="left:0;top:0;width:28.5px;height:7.3999999999999995px"></em><i style="top:7.30px"></i><i style="top:15.10px"></i><i style="top:22.90px"></i><i style="top:30.70px"></i><i style="top:38.50px"></i><i style="top:46.30px"></i><i style="top:54.10px"></i><i style="top:61.90px"></i><i style="top:69.70px"></i><i style="top:77.50px"></i><i style="top:85.30px"></i><i style="top:93.10px"></i><i style="top:100.90px"></i><i style="top:108.70px"></i><i style="top:116.50px"></i><i style="top:124.30px"></i><i style="top:132.10px"></i><i style="top:139.90px"></i><i style="top:147.70px"></i><i style="top:155.50px"></i><i style="top:163.30px"></i><i style="top:171.10px"></i><i style="top:178.90px"></i><u style="left:28.5px"></u><s style="color:#e4ebfb;left:2.5px;top:2.90px">3.22</s><s style="left:30.3px;top:2.90px">1</s><s style="left:2.5px;top:10.70px">4.12</s><s style="left:30.3px;top:10.70px">1</s><s style="left:2.5px;top:18.50px">5.02</s><s style="left:30.3px;top:18.50px">18</s><s style="left:2.5px;top:26.30px">5.92</s><s style="left:30.3px;top:26.30px">21</s><s style="left:2.5px;top:34.10px">6.82</s><s style="left:30.3px;top:34.10px">25</s><s style="left:2.5px;top:41.90px">7.72</s><s style="left:30.3px;top:41.90px">30</s><s style="left:2.5px;top:49.70px">8.62</s><s style="left:30.3px;top:49.70px">30</s><s style="left:2.5px;top:57.50px">9.52</s><s style="left:30.3px;top:57.50px">30</s><s style="left:2.5px;top:65.30px">10.4</s><s style="left:30.3px;top:65.30px">30</s><s style="left:2.5px;top:73.10px">11.3</s><s style="left:30.3px;top:73.10px">33</s><s style="left:2.5px;top:80.90px">12.2</s><s style="left:30.3px;top:80.90px">36</s><s style="left:2.5px;top:88.70px">13.1</s><s style="left:30.3px;top:88.70px">39</s><s style="left:2.5px;top:96.50px">14.0</s><s style="left:30.3px;top:96.50px">42</s><s style="left:2.5px;top:104.30px">14.9</s><s style="left:30.3px;top:104.30px">45</s><s style="left:2.5px;top:112.10px">15.8</s><s style="left:30.3px;top:112.10px">48</s><s style="left:2.5px;top:119.90px">16.7</s><s style="left:30.3px;top:119.90px">51</s><s style="left:2.5px;top:127.70px">17.6</s><s style="left:30.3px;top:127.70px">54</s><s style="left:2.5px;top:135.50px">18.5</s><s style="left:30.3px;top:135.50px">57</s><s style="left:2.5px;top:143.30px">19.4</s><s style="left:30.3px;top:143.30px">60</s><s style="left:2.5px;top:151.10px">20.3</s><s style="left:30.3px;top:151.10px">63</s><s style="left:2.5px;top:158.90px">21.2</s><s style="left:30.3px;top:158.90px">66</s><s style="left:2.5px;top:166.70px">22.1</s><s style="left:30.3px;top:166.70px">69</s></div>
<div class="tbl" style="left:196.8px;top:304px;width:59.6px;height:172px"><em style="left:0;top:0;width:28.5px;height:7.3999999999999995px"></em><i style="top:7.30px"></i><i style="top:15.10px"></i><i style="top:22.90px"></i><i style="top:30.70px"></i><i style="top:38.50px"></i><i style="top:46.30px"></i><i style="top:54.10px"></i><i style="top:61.90px"></i><i style="top:69.70px"></i><i style="top:77.50px"></i><i style="top:85.30px"></i><i style="top:93.10px"></i><i style="top:100.90px"></i><i style="top:108.70px"></i><i style="top:116.50px"></i><i style="top:124.30px"></i><i style="top:132.10px"></i><i style="top:139.90px"></i><i style="top:147.70px"></i><i style="top:155.50px"></i><i style="top:163.30px"></i><i style="top:171.10px"></i><i style="top:178.90px"></i><u style="left:28.5px"></u><s style="color:#e4ebfb;left:2.5px;top:2.90px">32.9</s><s style="left:30.3px;top:2.90px">102</s><s style="left:2.5px;top:10.70px">33.8</s><s style="left:30.3px;top:10.70px">106</s><s style="left:2.5px;top:18.50px">34.7</s><s style="left:30.3px;top:18.50px">110</s><s style="left:2.5px;top:26.30px">35.5</s><s style="left:30.3px;top:26.30px">114</s><s style="left:2.5px;top:34.10px">36.4</s><s style="left:30.3px;top:34.10px">118</s><s style="left:2.5px;top:41.90px">37.3</s><s style="left:30.3px;top:41.90px">122</s><s style="left:2.5px;top:49.70px">38.2</s><s style="left:30.3px;top:49.70px">126</s><s style="left:2.5px;top:57.50px">39.0</s><s style="left:30.3px;top:57.50px">130</s><s style="left:2.5px;top:65.30px">39.9</s><s style="left:30.3px;top:65.30px">134</s><s style="left:2.5px;top:73.10px">40.7</s><s style="left:30.3px;top:73.10px">138</s><s style="left:2.5px;top:80.90px">41.7</s><s style="left:30.3px;top:80.90px">142</s><s style="left:2.5px;top:88.70px">42.6</s><s style="left:30.3px;top:88.70px">146</s><s style="left:2.5px;top:96.50px">43.4</s><s style="left:30.3px;top:96.50px">150</s><s style="left:2.5px;top:104.30px">44.4</s><s style="left:30.3px;top:104.30px">154</s><s style="left:2.5px;top:112.10px">45.3</s><s style="left:30.3px;top:112.10px">170</s><s style="left:2.5px;top:119.90px">46.2</s><s style="left:30.3px;top:119.90px">176</s><s style="left:2.5px;top:127.70px">47.1</s><s style="left:30.3px;top:127.70px">182</s><s style="left:2.5px;top:135.50px">47.9</s><s style="left:30.3px;top:135.50px">204</s><s style="left:2.5px;top:143.30px">48.8</s><s style="left:30.3px;top:143.30px">208</s><s style="left:2.5px;top:151.10px">49.7</s><s style="left:30.3px;top:151.10px">212</s><s style="left:2.5px;top:158.90px">50.7</s><s style="left:30.3px;top:158.90px">218</s><s style="left:2.5px;top:166.70px">51.6</s><s style="left:30.3px;top:166.70px">224</s></div>
<div class="tbl" style="left:270.6px;top:304px;width:59.6px;height:172px"><em style="left:0;top:0;width:28.5px;height:7.3999999999999995px"></em><i style="top:7.30px"></i><i style="top:15.10px"></i><i style="top:22.90px"></i><i style="top:30.70px"></i><i style="top:38.50px"></i><i style="top:46.30px"></i><i style="top:54.10px"></i><i style="top:61.90px"></i><i style="top:69.70px"></i><i style="top:77.50px"></i><i style="top:85.30px"></i><i style="top:93.10px"></i><i style="top:100.90px"></i><i style="top:108.70px"></i><i style="top:116.50px"></i><i style="top:124.30px"></i><i style="top:132.10px"></i><i style="top:139.90px"></i><i style="top:147.70px"></i><i style="top:155.50px"></i><i style="top:163.30px"></i><i style="top:171.10px"></i><i style="top:178.90px"></i><u style="left:28.5px"></u><s style="color:#e4ebfb;left:0.8px;top:2.90px">150</s><s style="left:30.3px;top:2.90px">0</s><s style="left:0.8px;top:10.70px">110</s><s style="left:30.3px;top:10.70px">0</s><s style="left:0.8px;top:18.50px"> 90</s><s style="left:30.3px;top:18.50px">0</s><s style="left:0.8px;top:26.30px"> 80</s><s style="left:30.3px;top:26.30px">0</s><s style="left:0.8px;top:34.10px"> 70</s><s style="left:30.3px;top:34.10px">0</s><s style="left:0.8px;top:41.90px"> 61</s><s style="left:30.3px;top:41.90px">0</s><s style="left:0.8px;top:49.70px"> 58</s><s style="left:30.3px;top:49.70px">0</s><s style="left:0.8px;top:57.50px"> 54</s><s style="left:30.3px;top:57.50px">0</s><s style="left:0.8px;top:65.30px"> 52</s><s style="left:30.3px;top:65.30px">25</s><s style="left:0.8px;top:73.10px"> 50</s><s style="left:30.3px;top:73.10px">29</s><s style="left:0.8px;top:80.90px"> 48</s><s style="left:30.3px;top:80.90px">31</s><s style="left:0.8px;top:88.70px"> 45</s><s style="left:30.3px;top:88.70px">30</s><s style="left:0.8px;top:96.50px"> 41</s><s style="left:30.3px;top:96.50px">32</s><s style="left:0.8px;top:104.30px"> 37</s><s style="left:30.3px;top:104.30px">34</s><s style="left:0.8px;top:112.10px"> 34</s><s style="left:30.3px;top:112.10px">37</s><s style="left:0.8px;top:119.90px"> 30</s><s style="left:30.3px;top:119.90px">45</s><s style="left:0.8px;top:127.70px"> 27</s><s style="left:30.3px;top:127.70px">52</s><s style="left:0.8px;top:135.50px"> 25</s><s style="left:30.3px;top:135.50px">55</s><s style="left:0.8px;top:143.30px"> 23</s><s style="left:30.3px;top:143.30px">60</s><s style="left:0.8px;top:151.10px"> 20</s><s style="left:30.3px;top:151.10px">62</s><s style="left:0.8px;top:158.90px"> 18</s><s style="left:30.3px;top:158.90px">65</s><s style="left:0.8px;top:166.70px"> 16</s><s style="left:30.3px;top:166.70px">68</s></div>
<div class="tbl" style="left:342.4px;top:304px;width:59.6px;height:172px"><em style="left:0;top:0;width:28.5px;height:7.3999999999999995px"></em><i style="top:7.30px"></i><i style="top:15.10px"></i><i style="top:22.90px"></i><i style="top:30.70px"></i><i style="top:38.50px"></i><i style="top:46.30px"></i><i style="top:54.10px"></i><i style="top:61.90px"></i><i style="top:69.70px"></i><i style="top:77.50px"></i><i style="top:85.30px"></i><i style="top:93.10px"></i><i style="top:100.90px"></i><i style="top:108.70px"></i><i style="top:116.50px"></i><i style="top:124.30px"></i><i style="top:132.10px"></i><i style="top:139.90px"></i><i style="top:147.70px"></i><i style="top:155.50px"></i><i style="top:163.30px"></i><i style="top:171.10px"></i><i style="top:178.90px"></i><u style="left:28.5px"></u><s style="color:#e4ebfb;left:0.8px;top:2.90px">150</s><s style="left:30.3px;top:2.90px">5</s><s style="left:0.8px;top:10.70px">110</s><s style="left:30.3px;top:10.70px">5</s><s style="left:0.8px;top:18.50px"> 90</s><s style="left:30.3px;top:18.50px">0</s><s style="left:0.8px;top:26.30px"> 80</s><s style="left:30.3px;top:26.30px">0</s><s style="left:0.8px;top:34.10px"> 70</s><s style="left:30.3px;top:34.10px">0</s><s style="left:0.8px;top:41.90px"> 61</s><s style="left:30.3px;top:41.90px">0</s><s style="left:0.8px;top:49.70px"> 58</s><s style="left:30.3px;top:49.70px">0</s><s style="left:0.8px;top:57.50px"> 54</s><s style="left:30.3px;top:57.50px">1</s><s style="left:0.8px;top:65.30px"> 52</s><s style="left:30.3px;top:65.30px">2</s><s style="left:0.8px;top:73.10px"> 50</s><s style="left:30.3px;top:73.10px">3</s><s style="left:0.8px;top:80.90px"> 48</s><s style="left:30.3px;top:80.90px">6</s><s style="left:0.8px;top:88.70px"> 45</s><s style="left:30.3px;top:88.70px">9</s><s style="left:0.8px;top:96.50px"> 41</s><s style="left:30.3px;top:96.50px">20</s><s style="left:0.8px;top:104.30px"> 37</s><s style="left:30.3px;top:104.30px">27</s><s style="left:0.8px;top:112.10px"> 34</s><s style="left:30.3px;top:112.10px">29</s><s style="left:0.8px;top:119.90px"> 30</s><s style="left:30.3px;top:119.90px">32</s><s style="left:0.8px;top:127.70px"> 27</s><s style="left:30.3px;top:127.70px">36</s><s style="left:0.8px;top:135.50px"> 25</s><s style="left:30.3px;top:135.50px">42</s><s style="left:0.8px;top:143.30px"> 23</s><s style="left:30.3px;top:143.30px">55</s><s style="left:0.8px;top:151.10px"> 20</s><s style="left:30.3px;top:151.10px">62</s><s style="left:0.8px;top:158.90px"> 18</s><s style="left:30.3px;top:158.90px">67</s><s style="left:0.8px;top:166.70px"> 16</s><s style="left:30.3px;top:166.70px">72</s></div>
<div class="tbl" style="left:441px;top:304.8px;width:36.8px;height:10.4px;border-color:#cfcdc4"><em style="left:0;top:0;width:29px;height:9.6px"></em><s style="left:1.6px;top:3.2px;color:#e4ebfb">13</s></div>
<div class="tbl" style="left:406px;top:330.4px;width:81.6px;height:25.6px;font-size:5.6px"><em style="left:0;top:0;width:47.2px;height:7.3999999999999995px"></em><i style="top:7.30px;right:10px"></i><i style="top:15.10px;right:10px"></i><i style="top:22.90px;right:10px"></i><u style="left:47.2px;bottom:1px"></u><u style="left:70.2px;bottom:1px"></u><s style="left:1.2px;top:2.4px;color:#e4ebfb">MAN PRESSURE</s><s style="left:50.4px;top:2.2px;font-size:5.85px">47.9</s><s style="left:1.2px;top:9.8px">RPM</s><s style="left:48.8px;top:9.8px;font-size:5.85px">6000</s><s style="left:1.2px;top:17.8px">BELOW TP</s><s style="left:48.4px;top:17.6px;font-size:5.85px">10</s></div>
<div class="tbl" style="left:7.6px;top:470px;width:81.6px;height:10px;font-size:5.3px"><em style="left:0;top:0;width:51.6px;height:7.4px"></em><u style="left:51.6px"></u><s style="left:1.4px;top:3px;color:#e4ebfb;font-size:5.6px">LOW RPM ACCEL</s><s style="left:53.6px;top:2.2px;font-size:5.85px">10</s></div>
<svg style="position:absolute;left:0;top:0" width="800" height="486" viewBox="0 0 800 486"><defs><linearGradient id="gv" x1="0" y1="0" x2="1" y2="0"><stop offset="0" stop-color="#d3defc"/><stop offset="0.3" stop-color="#c3d2fa"/><stop offset="1" stop-color="#b7c8f5"/></linearGradient><linearGradient id="gh" x1="0" y1="0" x2="0" y2="1"><stop offset="0" stop-color="#d3defc"/><stop offset="0.3" stop-color="#c3d2fa"/><stop offset="1" stop-color="#b7c8f5"/></linearGradient><linearGradient id="gb" x1="0" y1="0" x2="1" y2="1"><stop offset="0" stop-color="#e2e9fd"/><stop offset="1" stop-color="#c0cff8"/></linearGradient></defs><rect x="791.6" y="25.2" width="8.4" height="449.4" fill="#fdfdfb"/><rect x="791.9" y="25.5" width="8.1" height="9" rx="1.2" fill="url(#gb)"/><rect x="791.9" y="36.2" width="8.1" height="417.6" rx="1.2" fill="url(#gv)"/><rect x="791.9" y="465.3" width="8.1" height="9" rx="1.2" fill="url(#gb)"/><path d="M793.4 31.6L795.5 29.2L797.6 31.6" stroke="#44557c" stroke-width="1.25" fill="none"/><path d="M793.4 468.6L795.5 471L797.6 468.6" stroke="#44557c" stroke-width="1.25" fill="none"/><rect x="0" y="474.4" width="791.6" height="8.6" fill="#fdfdfb"/><rect x="0" y="474.6" width="8.2" height="8.2" rx="1.2" fill="url(#gb)"/><rect x="8.8" y="474.6" width="765.2" height="8.2" rx="1.2" fill="url(#gh)"/><rect x="782.6" y="474.6" width="8.6" height="8.2" rx="1.2" fill="url(#gb)"/><path d="M5.4 476.8L3 478.9L5.4 481" stroke="#44557c" stroke-width="1.25" fill="none"/><path d="M785.8 476.8L788.2 478.9L785.8 481" stroke="#44557c" stroke-width="1.25" fill="none"/><rect x="0" y="482.9" width="800" height="2.1" fill="#3a6fcc"/><rect x="0" y="482.9" width="800" height="0.7" fill="#8aaae4"/><rect x="0" y="482.9" width="639" height="2.1" fill="#4468c4"/><rect x="0" y="482.9" width="639" height="0.7" fill="#90a8e0"/><rect x="0" y="482.9" width="52.4" height="2.1" fill="#3f8a48"/><rect x="0" y="482.9" width="52.4" height="0.7" fill="#8cc094"/></svg>
</div>
</body></html>
